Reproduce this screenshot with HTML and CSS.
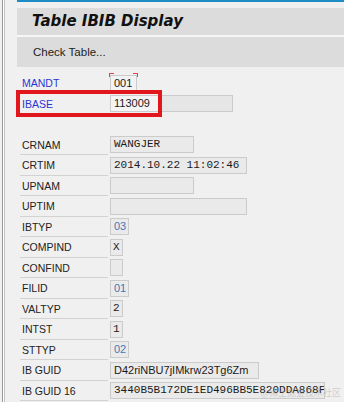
FILE: index.html
```html
<!DOCTYPE html>
<html lang="en">
<head>
    <meta charset="UTF-8">
    <meta name="viewport" content="width=device-width, initial-scale=1.0">
    <title>Table IBIB Display</title>
    <link rel="stylesheet" href="styles.css">
</head>
<body>
    <div class="shell">
        <div class="rail"></div>
        <div class="screen">
            <div class="topline"></div>
            <header class="titlebar">Table IBIB Display</header>
            <div class="toolbar">Check Table...</div>

            <!-- Feldliste -->
            <div class="form">
                <div class="row key">
                    <span class="label">MANDT</span>
                    <span class="value req w-s">001</span>
                </div>
                <div class="row key">
                    <span class="label">IBASE</span>
                    <span class="value ibase">113009</span>
                </div>
                <div class="row spacer"></div>
                <div class="row">
                    <span class="label">CRNAM</span>
                    <span class="value mono w-m">WANGJER</span>
                </div>
                <div class="row">
                    <span class="label">CRTIM</span>
                    <span class="value mono w-l">2014.10.22 11:02:46</span>
                </div>
                <div class="row">
                    <span class="label">UPNAM</span>
                    <span class="value w-m"></span>
                </div>
                <div class="row">
                    <span class="label">UPTIM</span>
                    <span class="value w-l"></span>
                </div>
                <div class="row">
                    <span class="label">IBTYP</span>
                    <span class="value code w-xs">03</span>
                </div>
                <div class="row">
                    <span class="label">COMPIND</span>
                    <span class="value mono w-1">X</span>
                </div>
                <div class="row">
                    <span class="label">CONFIND</span>
                    <span class="value w-1"></span>
                </div>
                <div class="row">
                    <span class="label">FILID</span>
                    <span class="value code w-xs">01</span>
                </div>
                <div class="row">
                    <span class="label">VALTYP</span>
                    <span class="value mono w-1">2</span>
                </div>
                <div class="row">
                    <span class="label">INTST</span>
                    <span class="value mono w-1">1</span>
                </div>
                <div class="row">
                    <span class="label">STTYP</span>
                    <span class="value code w-xs">02</span>
                </div>
                <div class="row">
                    <span class="label">IB GUID</span>
                    <span class="value w-guid">D42riNBU7jIMkrw23Tg6Zm</span>
                </div>
                <div class="row">
                    <span class="label">IB GUID 16</span>
                    <span class="value mono w-hex">3440B5B172DE1ED496BB5E820DDA868F</span>
                </div>

                <div class="highlight"></div>
            </div>
        </div>
    </div>
    <div class="watermark">@稀土掘金技术社区</div>
</body>
</html>
```

FILE: styles.css
```css
body {
    margin: 0;
    padding: 0;
    background-color: #f0f0f0;
    font-family: "Liberation Sans", Arial, sans-serif;
    color: #1a1a1a;
    overflow: hidden;
}
.shell {
    display: flex;
    min-height: 402px;
}
.rail {
    width: 13px;
    margin-left: 2px;
    border-left: 1px solid #9a9a9a;
    box-shadow: inset 1px 0 0 #ffffff, inset 2px 0 0 #c4c4c4;
}
.screen {
    flex: 1;
    margin-left: 1px;
}
.topline {
    height: 2px;
    background-color: #1d8bc4;
    margin-bottom: 6px;
}
.titlebar {
    height: 27px;
    line-height: 26px;
    padding-left: 15px;
    background-color: #dcdcdc;
    border-bottom: 2px solid #f6f6f6;
    font-family: "DejaVu Sans", Verdana, sans-serif;
    font-weight: bold;
    font-style: italic;
    font-size: 15px;
    color: #111;
}
.toolbar {
    height: 30px;
    line-height: 30px;
    padding-left: 16px;
    background-color: #dcdcdc;
    font-size: 11.5px;
    color: #222;
}
.form {
    position: relative;
    padding: 6px 0 0 3px;
}
.row {
    display: flex;
    align-items: center;
    height: 20.5px;
}
.label {
    box-sizing: border-box;
    width: 88px;
    height: 20.5px;
    line-height: 20px;
    padding-left: 2px;
    margin-right: 2px;
    font-size: 10.5px;
    color: #222;
    border-bottom: 1px solid #d2d2d2;
}
.key .label {
    color: #2b35d4;
    border-bottom-color: transparent;
}
.value {
    position: relative;
    box-sizing: border-box;
    height: 17px;
    line-height: 15px;
    padding-left: 3px;
    background-color: #eaeaea;
    border: 1px solid #cbcbcb;
    font-size: 11px;
    color: #1a1a1a;
    white-space: nowrap;
    overflow: hidden;
}
.mono {
    font-family: "Liberation Mono", "Courier New", monospace;
    font-size: 11px;
    padding-left: 3px;
}
.code {
    color: #4677b4;
}
.w-s { width: 27px; background-color: #f3f3f3; overflow: visible; }
.w-xs { width: 19px; }
.w-1 { width: 13px; padding-left: 2px; }
.w-m { width: 84px; }
.w-l { width: 137px; }
.w-guid { width: 149px; }
.w-hex { width: 215px; }
.ibase {
    width: 123px;
    background: linear-gradient(to right, #f4f4f4 0, #f4f4f4 50px, #e6e6e6 50px);
}
/* rote Ecken fuer Mussfeld */
.req::before,
.req::after {
    content: "";
    position: absolute;
    top: -3px;
    width: 4px;
    height: 3px;
    border-top: 1px solid #e8404a;
}
.req::before {
    left: -2px;
    border-left: 1px solid #e8404a;
}
.req::after {
    right: -2px;
    border-right: 1px solid #e8404a;
}
.highlight {
    position: absolute;
    left: -1px;
    top: 23px;
    width: 146px;
    height: 27px;
    box-sizing: border-box;
    border: 4px solid #e2161d;
}
.watermark {
    position: absolute;
    right: 3px;
    bottom: 3px;
    font-family: "Noto Sans CJK SC", sans-serif;
    font-size: 9px;
    color: rgba(140, 140, 140, 0.35);
}
```
